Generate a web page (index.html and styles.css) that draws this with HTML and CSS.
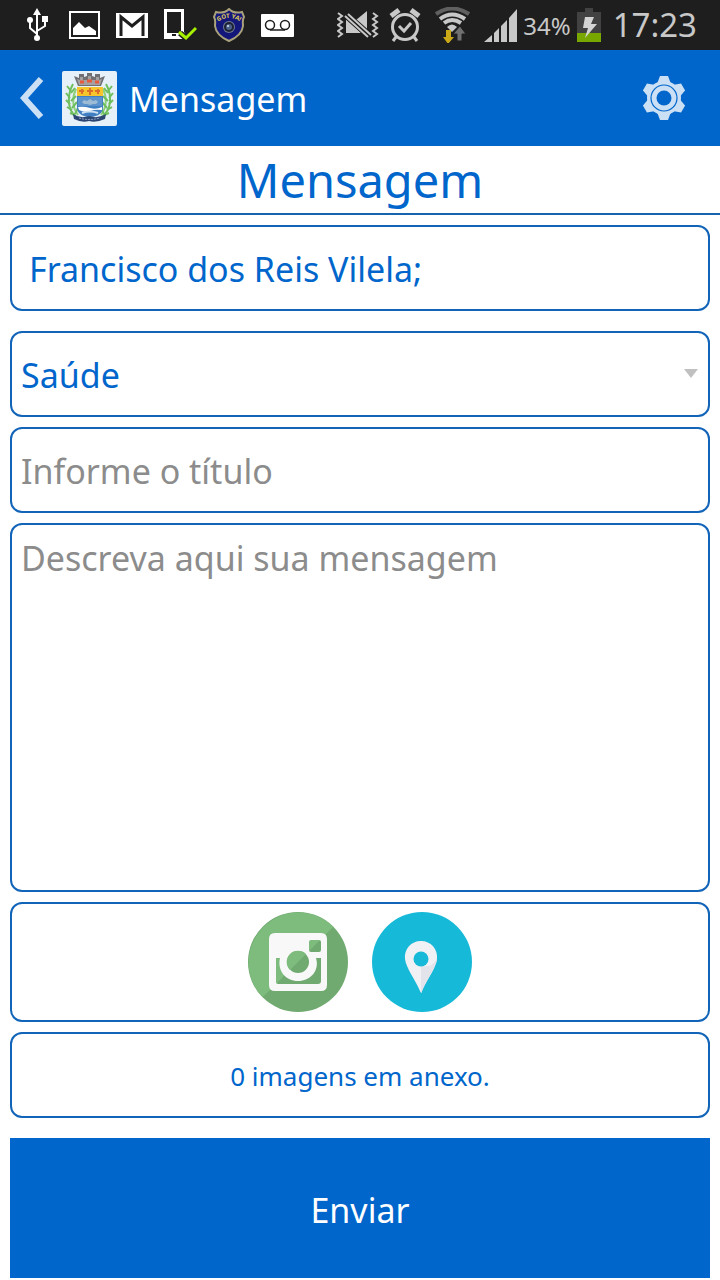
FILE: index.html
```html
<!DOCTYPE html>
<html lang="pt-BR">
<head>
    <meta charset="UTF-8">
    <meta name="viewport" content="width=device-width, initial-scale=1">
    <title>Mensagem</title>
    <link rel="stylesheet" href="styles.css">
</head>
<body>

    <div class="status-bar">
        <div class="status-left">
            <!-- USB -->
            <svg class="usb" width="22" height="34" viewBox="0 0 22 34" fill="none" stroke="#fff" stroke-width="2">
                <path d="M10 5V30M10 26L3 20V13M10 23L18 18V11"/>
                <path d="M10 0L14 7H6Z" fill="#fff" stroke="none"/>
                <circle cx="3" cy="12" r="3" fill="#fff" stroke="none"/>
                <rect x="15" y="8" width="6" height="6" fill="#fff" stroke="none"/>
                <circle cx="10" cy="30" r="3" fill="#fff" stroke="none"/>
            </svg>
            <!-- imagem -->
            <svg width="31" height="28" viewBox="0 0 31 28">
                <path d="M1 1H30V27H1Z" fill="none" stroke="#fff" stroke-width="2"/>
                <path d="M4 24V17L10 11L16 17L20 15L27 20V24Z" fill="#fff"/>
            </svg>
            <!-- e-mail -->
            <svg width="32" height="25" viewBox="0 0 32 25">
                <path d="M0 0H32V25H0Z" fill="#fff"/>
                <path d="M5 23V4L16 13L27 4V23" fill="none" stroke="#1e1e1e" stroke-width="3"/>
            </svg>
            <!-- aparelho conectado -->
            <svg width="33" height="32" viewBox="0 0 33 32">
                <path fill="#fff" fill-rule="evenodd" d="M0 0H20V23L22 26L19 30H0ZM3 3V24H17V3ZM8 25V27H12V25Z"/>
                <path d="M16 24L22 29L32 19" fill="none" stroke="#1e1e1e" stroke-width="6"/>
                <path d="M15 23L22 29L32 19" fill="none" stroke="#a6f000" stroke-width="3"/>
            </svg>
            <!-- escudo -->
            <svg width="32" height="34" viewBox="0 0 32 34">
                <path d="M16 1C12 5 7 5 3 4L1 9C3 12 2 15 2 18C3 26 9 30 16 33C23 30 29 26 30 18C30 15 29 12 31 9L29 4C25 5 20 5 16 1Z" fill="#14177a" stroke="#a9a27c" stroke-width="2"/>
                <path id="arc" d="M3 15Q16 5 29 15" fill="none"/>
                <text class="shield-text"><textPath href="#arc" startOffset="50%">GOT YA!</textPath></text>
                <circle cx="16" cy="19" r="6" fill="#6f7b94"/>
                <circle cx="16" cy="19" r="5" fill="#1c2233"/>
                <circle cx="16" cy="19" r="3" fill="#4c6288"/>
                <circle cx="15" cy="18" r="1" fill="#dce6f5"/>
            </svg>
            <!-- correio de voz -->
            <svg width="33" height="23" viewBox="0 0 33 23">
                <rect width="33" height="23" rx="1" fill="#fff"/>
                <g fill="none" stroke="#1e1e1e" stroke-width="1.5">
                    <circle cx="9" cy="11" r="4.5"/>
                    <circle cx="24" cy="11" r="4.5"/>
                    <path d="M9 16H24"/>
                </g>
            </svg>
        </div>
        <div class="status-right">
            <!-- vibrar -->
            <svg width="42" height="28" viewBox="0 0 42 28">
                <path d="M9 8V22H24ZM19 9L30 0V19Z" fill="#c8c8c8"/>
                <path d="M8 3L33 25" stroke="#1e1e1e" stroke-width="7"/>
                <path d="M8 5L31 26M11 3L34 24" stroke="#c8c8c8" stroke-width="2"/>
                <path d="M1 2L5 5L1 8L5 11L1 14L5 17L1 20L5 23L1 26M36 2L40 5L36 8L40 11L36 14L40 17L36 20L40 23L36 26" fill="none" stroke="#c8c8c8" stroke-width="2"/>
            </svg>
            <!-- alarme -->
            <svg class="alarm" width="32" height="34" viewBox="0 0 32 34" fill="none" stroke="#c8c8c8">
                <circle cx="16" cy="19" r="12.5" stroke-width="3"/>
                <path d="M2 8L10 2M30 8L22 2" stroke-width="5"/>
                <path d="M7 29L4 33M25 29L28 33" stroke-width="3"/>
                <path d="M10 18L15 23L22 15" stroke-width="3"/>
            </svg>
            <!-- wi-fi -->
            <svg width="35" height="36" viewBox="0 0 35 36">
                <path d="M1 7Q17 -4 34 7" fill="none" stroke="#606060" stroke-width="4"/>
                <path d="M5 12Q17 3 30 12M9 16Q17 10 26 16" fill="none" stroke="#c8c8c8" stroke-width="4"/>
                <path d="M12 20Q17 15 22 20L17 25Z" fill="#c8c8c8"/>
                <path d="M11 23H16V30H19L13 37L8 30H11Z" fill="#cba817"/>
                <path d="M22 34V27H18L25 19L31 27H27V34Z" fill="#707070" stroke="#1e1e1e"/>
            </svg>
            <!-- sinal -->
            <svg class="signal" width="33" height="33" viewBox="0 0 33 33">
                <path d="M0 33L8 26V33ZM10 24L15 19V33H10ZM17 17L23 11V33H17ZM25 9L33 0V33H25Z" fill="#c8c8c8"/>
            </svg>
            <span class="battery-level">34%</span>
            <!-- bateria -->
            <svg width="24" height="34" viewBox="0 0 24 34">
                <path d="M8 0H16V4H24V26H0V4H8Z" fill="#424242"/>
                <path d="M0 25H24V34H0Z" fill="#78a800"/>
                <path d="M8 9H17L14 16H20L8 30L11 20H6Z" fill="#d4d4d4"/>
            </svg>
            <span class="clock">17:23</span>
        </div>
    </div>

    <header class="app-bar">
        <button type="button" class="icon-button back" aria-label="Voltar">
            <svg width="24" height="42" viewBox="0 0 24 42">
                <path d="M21 2L4 21L21 40" fill="none" stroke="#cce0f5" stroke-width="6"/>
            </svg>
        </button>
        <!-- brasão -->
        <svg class="crest" width="55" height="55" viewBox="0 0 55 55">
            <rect width="55" height="55" rx="2" fill="#e6f0f8"/>
            <g fill="none" stroke="#6fbf5e" stroke-width="2">
                <path d="M11 13C5 24 5 38 14 46M44 13C50 24 50 38 40 46"/>
                <path stroke="#8fd07e" d="M14 18C10 26 10 36 16 44M41 18C45 26 45 36 39 44"/>
                <path d="M9 20L5 15M8 27L4 22M8 33L4 29M10 39L5 36M13 44L8 42M46 20L50 15M47 27L51 22M47 33L51 29M45 39L50 36M42 44L47 42M9 22L13 17M9 30L14 25M10 37L15 31M13 43L16 37M46 22L42 17M46 30L41 25M45 37L40 31M42 43L39 37"/>
            </g>
            <path d="M12 5L17 7V3H22V6L25 5V2H30V5L33 6V3H38V7L43 5L39 15H16Z" fill="#6f6f74"/>
            <path d="M15 8L18 9V6H21V9H26V5H29V9H34V6H37V9L40 8L38 14H17Z" fill="#a5a1a2"/>
            <path d="M18 11H22M25 10H30M33 11H37" stroke="#e65b3d" stroke-width="3"/>
            <path d="M15 16H41V36Q41 45 28 46Q15 45 15 36Z" fill="#3f7fc2"/>
            <path d="M15 16H41V25H15Z" fill="#f6c52b"/>
            <path d="M17 20H22M25 20H31M33 20H38M20 18V23M28 17V24M36 18V23" stroke="#db6f29" stroke-width="2"/>
            <path d="M16 26H40V35H16Z" fill="#5c93cd"/>
            <path d="M20 31L22 29L25 30L28 28L31 30L34 29L36 31L34 33H31L28 34L25 33H22Z" fill="#9dbbd4"/>
            <path d="M16 36Q22 35 28 37T40 36V39Q34 38 28 40T17 39Z" fill="#fff"/>
            <path d="M20 42Q28 39 36 42" fill="none" stroke="#cfe2f2" stroke-width="2"/>
            <path d="M11 43Q18 48 27 45Q36 48 44 43L43 48Q34 52 27 50Q20 52 12 48Z" fill="#2c4674"/>
            <path d="M17 47Q27 50 38 47" fill="none" stroke="#8fa6c4" stroke-dasharray="2 1"/>
        </svg>
        <span class="app-name">Mensagem</span>
        <button type="button" class="icon-button settings" aria-label="Configurações">
            <svg width="42" height="44" viewBox="-21 -22 42 44">
                <g fill="#cce0f5">
                    <circle r="17"/>
                    <path id="tooth" d="M-7 -14L-4 -22H4L7 -14Z"/>
                    <use href="#tooth" transform="rotate(60)"/>
                    <use href="#tooth" transform="rotate(120)"/>
                    <use href="#tooth" transform="rotate(180)"/>
                    <use href="#tooth" transform="rotate(240)"/>
                    <use href="#tooth" transform="rotate(300)"/>
                </g>
                <circle r="13" fill="none" stroke="#0066cc" stroke-width="1.2"/>
                <circle r="7.5" fill="#0066cc"/>
            </svg>
        </button>
    </header>

    <h1 class="title">Mensagem</h1>

    <form class="message-form">
        <input type="text" class="field recipient" aria-label="Destinatário" value="Francisco dos Reis Vilela;">
        <div class="select-wrap">
            <select class="field" aria-label="Categoria">
                <option>Saúde</option>
            </select>
        </div>
        <input type="text" class="field" aria-label="Título" placeholder="Informe o título">
        <textarea class="field description" aria-label="Mensagem" placeholder="Descreva aqui sua mensagem"></textarea>

        <div class="attachments">
            <button type="button" class="icon-button" aria-label="Anexar imagem">
                <svg width="100" height="100" viewBox="0 0 100 100">
                    <circle cx="50" cy="50" r="50" fill="#70aa70"/>
                    <path d="M14.65 85.35A50 50 0 0 1 85.35 14.65Z" fill="#7dbc7c"/>
                    <path fill="#f8f8f8" fill-rule="evenodd" d="M27 21H73Q79 21 79 27V73Q79 79 73 79H27Q21 79 21 73V27Q21 21 27 21ZM63 28Q61 28 61 30V38Q61 40 63 40H71Q73 40 73 38V30Q73 28 71 28ZM28 46V70Q28 72 30 72H70Q73 72 73 69V46H68C72 59 62 69 50 69C38 69 29 59 32 46Z"/>
                    <circle cx="50" cy="50" r="11" fill="#70aa70"/>
                    <path d="M42 58A11 11 0 0 1 58 42Z" fill="#7dbc7c"/>
                </svg>
            </button>
            <button type="button" class="icon-button" aria-label="Anexar localização">
                <svg width="100" height="100" viewBox="0 0 100 100">
                    <circle cx="50" cy="50" r="50" fill="#16b9d8"/>
                    <path d="M49 29C39 29 32 37 33 47C34 56 43 67 48 79Q49 82 50 79C55 67 64 56 65 47C66 37 59 29 49 29Z" fill="#f0f1f5"/>
                    <path d="M49 54V81Q50 81 50 79C55 67 64 56 65 47Q60 56 49 54Z" fill="#e3e3ec"/>
                    <circle cx="49" cy="47" r="7.5" fill="#16b9d8"/>
                </svg>
            </button>
        </div>

        <div class="attachment-count">0 imagens em anexo.</div>

        <button type="submit" class="send">Enviar</button>
    </form>

</body>
</html>
```

FILE: styles.css
```css
* {
    box-sizing: border-box;
}

body {
    display: flex;
    flex-direction: column;
    min-height: 100vh;
    margin: 0;
    background-color: #fff;
    color: #0066cc;
    font-family: "Noto Sans", sans-serif;
    font-size: 34px;
}

svg {
    display: block;
    flex-shrink: 0;
}

.status-bar {
    display: flex;
    justify-content: space-between;
    height: 50px;
    padding: 0 23px 0 27px;
    background-color: #1e1e1e;
    color: #c8c8c8;
}

.status-left,
.status-right {
    display: flex;
    align-items: center;
}

.status-left {
    gap: 16px;
}

.status-right {
    gap: 6px;
}

.usb {
    margin-right: 4px;
}

.shield-text {
    fill: #e0cf58;
    font-size: 6px;
    font-weight: bold;
    text-anchor: middle;
}

.alarm {
    margin: 0 8px 0 4px;
}

.signal {
    margin-left: 8px;
}

.battery-level {
    font-size: 24px;
}

.clock {
    margin-left: 6px;
    font-size: 33px;
    line-height: 48px;
}

.app-bar {
    display: flex;
    align-items: center;
    height: 96px;
    padding: 0 35px 0 20px;
    background-color: #0066cc;
    color: #fff;
}

.icon-button {
    padding: 0;
    border: none;
    background: none;
    cursor: pointer;
}

.crest {
    margin: 0 12px 0 18px;
}

.app-name {
    padding-top: 2px;
}

.settings {
    margin-left: auto;
}

.title {
    margin: 0;
    padding-top: 2px;
    border-bottom: 2px solid #1763ad;
    font-size: 47px;
    font-weight: normal;
    line-height: 65px;
    text-align: center;
}

.message-form {
    display: flex;
    flex: 1;
    flex-direction: column;
    gap: 10px;
    padding: 10px 10px 2px;
}

.field,
.attachments,
.attachment-count {
    width: 100%;
    min-height: 86px;
    border: 2px solid #1264b8;
    border-radius: 12px;
    background-color: #fff;
}

.field {
    display: block;
    margin: 0;
    padding: 2px 9px 0;
    color: #0066cc;
    font: inherit;
    outline: none;
    appearance: none;
}

.field::placeholder {
    color: #8c8c8c;
    opacity: 1;
}

.recipient {
    margin-bottom: 10px;
    padding: 2px 17px 0;
}

.select-wrap {
    position: relative;
}

.select-wrap::after {
    content: "";
    position: absolute;
    top: 38px;
    right: 12px;
    border: 7px solid transparent;
    border-top: 9px solid #c0c0c0;
    border-bottom: 0;
    pointer-events: none;
}

.description {
    flex: 1;
    padding-top: 10px;
    resize: none;
}

.attachments {
    display: flex;
    justify-content: center;
    gap: 24px;
    padding: 8px;
}

.attachment-count {
    display: flex;
    align-items: center;
    justify-content: center;
    margin-bottom: 10px;
    padding-top: 2px;
    font-size: 26px;
}

.send {
    height: 140px;
    padding-top: 4px;
    border: none;
    background-color: #0066cc;
    color: #fff;
    font: inherit;
    cursor: pointer;
}
```
